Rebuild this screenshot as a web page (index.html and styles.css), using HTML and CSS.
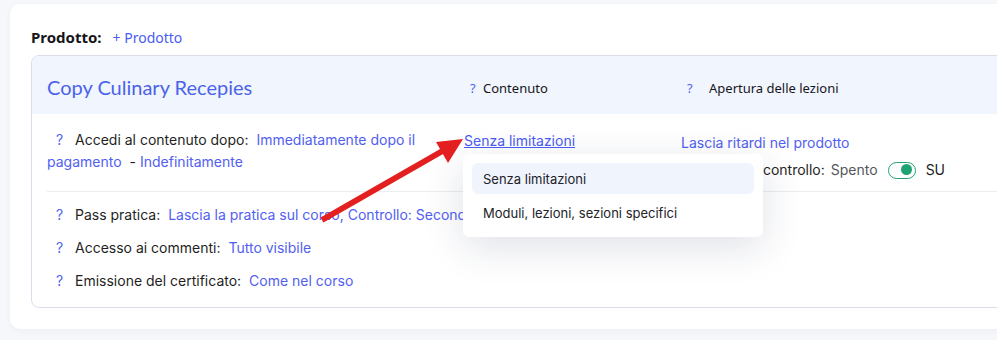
FILE: index.html
```html
<!DOCTYPE html>
<html lang="it">
<head>
    <meta charset="UTF-8">
    <meta name="viewport" content="width=device-width, initial-scale=1.0">
    <title>Prodotto</title>
    <link rel="stylesheet" href="styles.css">
</head>
<body>
    <div class="card">
        <div class="product-line">
            <span class="product-label">Prodotto:</span>
            <a class="add-link" href="#">+ Prodotto</a>
        </div>

        <div class="panel">
            <div class="panel-head">
                <div class="course-title">Copy Culinary Recepies</div>
                <div class="head-col"><span class="q">?</span><span>Contenuto</span></div>
                <div class="head-col wide"><span class="q">?</span><span>Apertura delle lezioni</span></div>
            </div>

            <div class="main-row">
                <div class="cell-access">
                    <span class="q q-row">?</span><span class="label">Accedi al contenuto dopo:</span> <a class="val" href="#">Immediatamente dopo il</a> <a class="val val-end" href="#">pagamento</a><span class="dash">-</span><a class="val val-end" href="#">Indefinitamente</a>
                </div>
                <div class="cell-content">
                    <div class="select">
                        <a class="select-link" href="#">Senza limitazioni</a>
                        <!-- menu aperto -->
                        <div class="menu">
                            <div class="menu-item active">Senza limitazioni</div>
                            <div class="menu-item">Moduli, lezioni, sezioni specifici</div>
                        </div>
                    </div>
                </div>
                <div class="cell-open">
                    <a class="val" href="#">Lascia ritardi nel prodotto</a>
                    <div class="control-line">
                        <span>Ritardo del controllo:</span>
                        <span class="off">Spento</span>
                        <span class="toggle"><span class="knob"></span></span>
                        <span class="su">SU</span>
                    </div>
                </div>
            </div>

            <div class="rows">
                <div class="row"><span class="q q-row">?</span><span class="label">Pass pratica:</span> <a class="val" href="#">Lascia la pratica sul corso, Controllo: Secondo la lezione</a></div>
                <div class="row"><span class="q q-row">?</span><span class="label">Accesso ai commenti:</span> <a class="val" href="#">Tutto visibile</a></div>
                <div class="row"><span class="q q-row">?</span><span class="label">Emissione del certificato:</span> <a class="val" href="#">Come nel corso</a></div>
            </div>
        </div>
    </div>

    <!-- freccia di annotazione -->
    <svg class="arrow" width="997" height="340" viewBox="0 0 997 340">
        <line x1="322" y1="220" x2="446" y2="149" stroke="#e3201f" stroke-width="6" />
        <polygon points="463,139 436,142 448,163" fill="#e3201f" />
    </svg>
</body>
</html>
```

FILE: styles.css
```css
/* --- base --- */
body {
    margin: 0;
    background-color: #f5f7fa;
    font-family: Inter, "Liberation Sans", sans-serif;
    font-size: 14px;
    color: #1f1f24;
    overflow: hidden;
    height: 340px;
    position: relative;
}

a {
    text-decoration: none;
}

.card {
    margin: 4px 0 0 10px;
    width: 1100px;
    background-color: #fff;
    border-radius: 10px;
    padding: 23px 0 21px 21px;
    box-shadow: 0 2px 6px rgba(40, 50, 90, 0.04);
}

/* --- riga prodotto --- */
.product-line {
    display: flex;
    align-items: center;
    gap: 11px;
    height: 20px;
    margin-bottom: 8px;
    font-family: "Noto Sans", sans-serif;
}

.product-label {
    font-weight: bold;
    font-size: 15px;
    color: #16161a;
}

.add-link {
    font-size: 14px;
    color: #4b5cf2;
}

/* --- pannello --- */
.panel {
    border: 1px solid #dddcec;
    border-radius: 8px;
    overflow: hidden;
}

.panel-head {
    display: grid;
    grid-template-columns: 423px 217px 1fr;
    align-items: center;
    height: 58px;
    padding-left: 15px;
    background-color: #f1f5fe;
}

.course-title {
    font-family: Lato, sans-serif;
    font-size: 20px;
    color: #4a63e8;
    padding-top: 3px;
}

.head-col {
    font-family: "Noto Sans", sans-serif;
    font-size: 13px;
    color: #16161a;
    padding-top: 6px;
}

.q {
    display: inline-block;
    color: #5263f0;
    width: 13px;
}

.head-col.wide .q {
    width: 22px;
}

.q-row {
    margin-left: 9px;
    width: 19px;
}

.val {
    color: #5160f0;
    margin-left: 4px;
}

.dash {
    color: #222;
    margin: 0 4px 0 8px;
}

.val-end {
    margin-left: 0;
}

/* --- riga principale --- */
.main-row {
    display: grid;
    grid-template-columns: 417px 217px 1fr;
    margin-left: 15px;
    padding: 15px 0 12px;
    border-bottom: 1px solid #ececf1;
    line-height: 22px;
}

.cell-content {
    padding-top: 1px;
}

.select {
    position: relative;
    display: inline-block;
}

.select-link {
    color: #4b5cf2;
    text-decoration: underline;
}

.menu {
    position: absolute;
    top: 24px;
    left: -1px;
    width: 282px;
    padding: 9px;
    background-color: #fff;
    border-radius: 6px;
    box-shadow: 0 10px 40px rgba(30, 40, 80, 0.14);
    z-index: 2;
    line-height: normal;
}

.menu-item {
    display: flex;
    align-items: center;
    height: 31px;
    padding-left: 11px;
    border-radius: 6px;
    font-size: 13px;
    color: #222228;
    white-space: nowrap;
}

.menu-item + .menu-item {
    margin-top: 3px;
}

.menu-item.active {
    background-color: #f0f4fd;
}

.cell-open {
    padding-top: 3px;
}

.cell-open .val {
    margin-left: 0;
}

.control-line {
    display: flex;
    align-items: center;
    height: 18px;
    margin-top: 7px;
    margin-left: 7px;
    white-space: nowrap;
}

.off {
    color: #55565c;
    margin-left: 6px;
}

.toggle {
    display: inline-block;
    position: relative;
    box-sizing: border-box;
    width: 28px;
    height: 17px;
    margin-left: 10px;
    border: 1.5px solid #1fa372;
    border-radius: 9px;
    background: #fff;
}

.knob {
    position: absolute;
    right: 2.5px;
    top: 1.6px;
    width: 11px;
    height: 11px;
    border-radius: 50%;
    background-color: #1fa372;
}

.su {
    margin-left: 10px;
    color: #1c1c22;
}

/* --- altre righe --- */
.rows {
    padding: 6px 0 10px 15px;
}

.row {
    height: 33px;
    line-height: 33px;
    white-space: nowrap;
}

/* --- freccia --- */
.arrow {
    position: absolute;
    left: 0;
    top: 0;
    z-index: 3;
    pointer-events: none;
}
```
